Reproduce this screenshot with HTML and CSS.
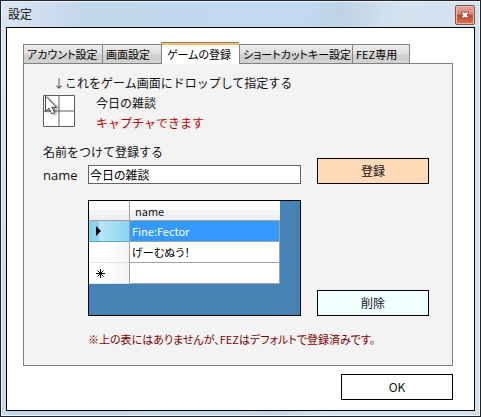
FILE: index.html
```html
<!DOCTYPE html>
<html lang="ja">
<head>
    <meta charset="UTF-8">
    <meta name="viewport" content="width=device-width, initial-scale=1.0">
    <title>設定</title>
    <link rel="stylesheet" href="styles.css">
</head>
<body>
    <div class="window">
        <header class="titlebar">
            <h1>設定</h1>
            <button type="button" class="close" aria-label="閉じる">
                <svg width="8" height="8" viewBox="0 0 8 8">
                    <path d="M.5 1h2.500l1 1 1-1h2.500v1L6 4l1.500 2v1H5L4 6 3 7H.5V6L2 4 .5 2z" fill="#fff" stroke="#5a4044" stroke-width=".8"/>
                </svg>
            </button>
        </header>
        <main class="client">
            <div class="tabs" role="tablist">
                <button type="button" class="tab" role="tab">アカウント設定</button>
                <button type="button" class="tab" role="tab">画面設定</button>
                <button type="button" class="tab active" role="tab" aria-selected="true">ゲームの登録</button>
                <button type="button" class="tab" role="tab">ショートカットキー設定</button>
                <button type="button" class="tab last" role="tab">FEZ専用</button>
            </div>
            <section class="panel" role="tabpanel">
                <p class="hint"><span class="arrow">↓</span>これをゲーム画面にドロップして指定する</p>
                <div class="capture">
                    <svg class="picker" width="33" height="33" viewBox="0 0 33 33">
                        <defs>
                            <filter id="shadow" x="-30%" y="-30%" width="180%" height="180%">
                                <feDropShadow dx="2" dy="1" stdDeviation="1" flood-opacity=".4"/>
                            </filter>
                        </defs>
                        <path d="M.5.5h31v31H.5zM16 .5v31M.5 16h31" fill="#fff" stroke="#5c5c5c"/>
                        <path d="M2.500 1v15.500l3.500-3.200 2.800 5.500 2.700-1.300-2.600-5.200h4.600z" fill="#fff" stroke="#444" filter="url(#shadow)"/>
                    </svg>
                    <div>
                        <p>今日の雑談</p>
                        <p class="status">キャプチャできます</p>
                    </div>
                </div>
                <form class="register">
                    <p class="lead">名前をつけて登録する</p>
                    <label class="name-label" for="name">name</label>
                    <input class="name-input" id="name" type="text" value="今日の雑談">
                    <button type="button" class="btn add">登録</button>
                </form>
                <div class="games">
                    <div class="grid">
                        <table>
                            <thead>
                                <tr><th class="mark"></th><th class="col">name</th></tr>
                            </thead>
                            <tbody>
                                <tr class="selected">
                                    <th class="mark"><svg width="6" height="10" viewBox="0 0 6 10"><path d="M0 0l5 5-5 5z"/></svg></th>
                                    <td>Fine:Fector</td>
                                </tr>
                                <tr>
                                    <th class="mark"></th>
                                    <td>げーむぬう！</td>
                                </tr>
                                <tr>
                                    <th class="mark"><svg width="9" height="9" viewBox="0 0 9 9"><path d="M4.500 0v9M0 4.500h9M1.500 1.500l6 6M7.500 1.500l-6 6" stroke="#000"/></svg></th>
                                    <td></td>
                                </tr>
                            </tbody>
                        </table>
                    </div>
                    <button type="button" class="btn remove">削除</button>
                </div>
                <p class="note">※上の表にはありませんが、FEZはデフォルトで登録済みです。</p>
            </section>
            <div class="footer">
                <button type="button" class="btn">OK</button>
            </div>
        </main>
    </div>
</body>
</html>
```

FILE: styles.css
```css
* { box-sizing: border-box; margin: 0; padding: 0; }
body { font-family: "Noto Sans CJK JP", sans-serif; font-size: 12px; line-height: 20px; color: #111; }
button, input { font: inherit; color: inherit; }
svg { display: block; }

.window { display: flex; flex-direction: column; min-height: 100vh; padding: 1px 5px 5px; border: 1px solid #22242c; background: linear-gradient(100deg, #dbe6f2 0, #c3d7ec 15%, #c3d9f0 55%, #bfd3e5 62%, #d3e3f0 72%, #d3e0ee 100%); box-shadow: inset 0 0 0 1px #eef5fc; }
.titlebar { display: flex; justify-content: space-between; height: 25px; }
.titlebar h1 { padding: 2px 2px 0; font-size: 12px; font-weight: normal; }
.close { display: flex; justify-content: center; align-items: center; width: 20px; height: 20px; margin-top: 3px; border: 1px solid #7c5659; border-radius: 2px; background: linear-gradient(#e9a898, #dc8270 45%, #c94428 50%, #d9704f); box-shadow: inset 0 0 0 1px #f0b5a6; }

.client { flex: 1; display: flex; flex-direction: column; padding: 14px 21px 10px 16px; border: 1px solid #000; background: #fff; }
.tabs { display: grid; grid-template-columns: 79px 59px 78px 113px 58px; align-items: end; font-size: 11px; font-feature-settings: "palt"; }
.tab { height: 19px; padding: 0 3px; border: 1px solid #858585; border-width: 1px 0 0 1px; background: linear-gradient(#ececec, #dedede 50%, #cecece 55%, #d2d2d2); line-height: 18px; text-align: left; white-space: nowrap; color: #000; }
.tab.active { height: 22px; margin-bottom: -1px; padding: 0 5px; background: #fff; box-shadow: inset 0 2px 0 #fbbd58; z-index: 1; }
.tab.last { border-right-width: 1px; }

.panel { flex: 1; padding: 9px 23px 14px 19px; border: 1px solid #808080; background: #f3f3f3; }
.hint { padding-left: 10px; }
.arrow { color: #444; }
.capture { display: flex; gap: 20px; margin-bottom: 9px; }
.picker { margin-top: 2px; }
.status { color: #c00000; }

.register { display: grid; grid-template-columns: 45px 1fr 112px; grid-template-rows: 20px 19px; row-gap: 3px; margin-bottom: 16px; }
.lead { grid-column: 1 / 3; }
.name-label { font-family: "Open Sans", sans-serif; font-size: 13px; }
.name-input { margin-right: 16px; min-width: 0; padding: 0 1px; border: 1px solid #646464; background: #fff; line-height: 16px; font-feature-settings: "palt"; color: #000; }
.btn { width: 112px; height: 26px; border: 1px solid #000; background: #fff; line-height: 24px; }
.add { grid-column: 3; grid-row: 1 / 3; align-self: end; background: #ffdab9; }
.remove { background: #f0ffff; }

.games { display: flex; align-items: flex-end; gap: 16px; margin-left: 45px; }
.grid { flex: 1; padding: 0 20px 31px 0; border: 1px solid #000; background: #4682b4; }
.grid table { width: 100%; border-collapse: separate; border-spacing: 0; table-layout: fixed; background: #fff; font-size: 11px; line-height: 18px; font-feature-settings: "palt"; }
.grid th { font-weight: normal; text-align: left; }
.grid thead th { height: 20px; border-bottom: 1px solid #a0a0a0; background: linear-gradient(#fff 45%, #f4f5f7 50%, #eceef0); }
.grid td { height: 21px; padding: 0 2px; border: 1px solid #a0a0a0; border-width: 0 1px 1px 0; color: #000; }
.grid .mark { width: 41px; padding-left: 7px; border-right: 1px solid #a0a0a0; }
.grid tbody .mark { border-bottom: 1px solid #e0e2e4; background: linear-gradient(90deg, #fff 40%, #f1f3f5); }
.grid .col { padding-left: 5px; }
.grid .selected td { background: #3399ff; color: #fff; }
.grid .selected .mark { border-bottom-color: #5ba9c8; background: linear-gradient(90deg, #8ad4f0 25%, #b9e7f9 26%, #8ad4f0); }
.note { margin-top: 13px; padding-left: 45px; font-size: 11px; font-feature-settings: "palt"; color: #800000; }
.footer { display: flex; justify-content: flex-end; margin-top: 8px; }
```
